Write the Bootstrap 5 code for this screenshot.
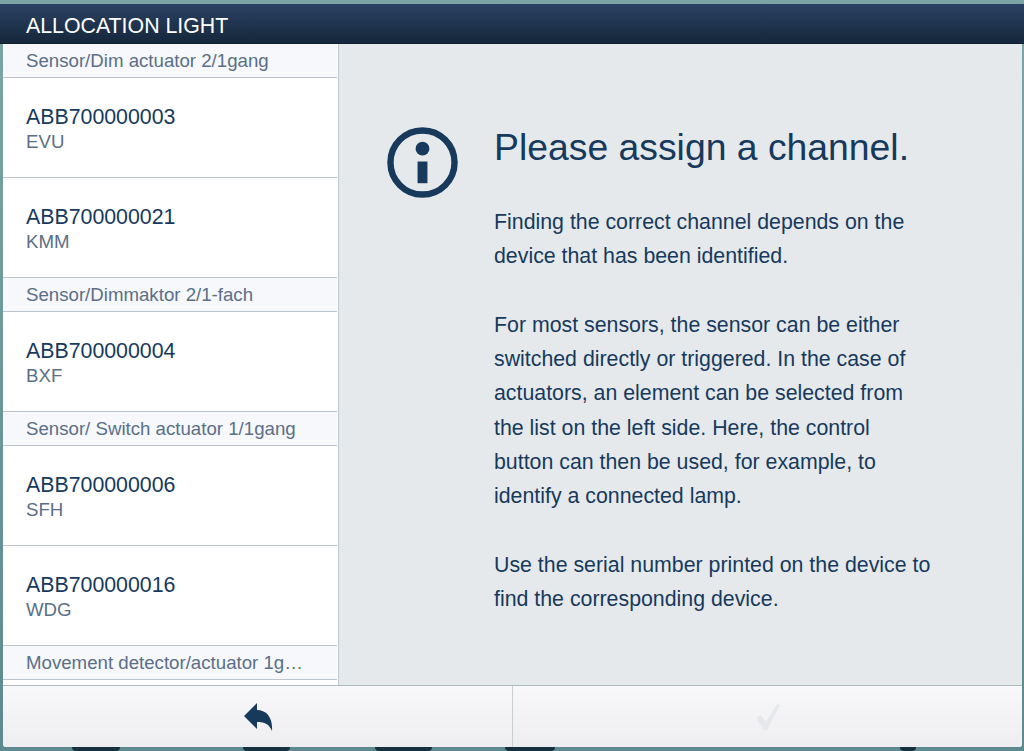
<!DOCTYPE html>
<html lang="en">
<head>
<meta charset="utf-8">
<title>Allocation light</title>
<link href="https://cdn.jsdelivr.net/npm/bootstrap@5.3.0/dist/css/bootstrap.min.css" rel="stylesheet">
<style>
html,body{height:751px;overflow:hidden}
body{background:linear-gradient(#7ba6a3,#5c8a8f);font-family:"Liberation Sans",Arial,sans-serif;color:#17395c;padding-top:4px}
.titlebar{height:40px;background:linear-gradient(#2b4263,#15273b);color:#fff;font-size:21.33px;line-height:44px;padding-left:26px;border-bottom:1px solid #10202f}
.shell{height:703px;margin-left:3px;margin-right:2px;border-radius:0 0 3px 3px;overflow:hidden;background:#e5e9ec}
.mainrow{height:641px;min-height:0}
.sidelist{width:334px;flex:none;background:#fff;border-right:1px solid #bfc8cd;box-sizing:content-box;padding-right:1px;overflow:hidden}
.sechead{height:33.5px;background:#f6f8fb;color:#5b6f87;font-size:18.67px;line-height:34.4px;padding-left:23px;border-bottom:1px solid #bcc5cd;white-space:nowrap}
.chan{height:100.4px;padding:27px 0 0 23px;border-bottom:1px solid #bcc3ca}
.chan-id{font-size:21.33px;line-height:25px;color:#17395c}
.chan-sub{font-size:18.67px;line-height:24px;color:#5b6f87}
.infopane{background:#e5e9ec;padding:83px 0 0 48px}
.infoicon{width:71px;height:71px;flex:none;margin-right:36px}
.infohead{font-size:37.33px;line-height:40px;margin:0 0 38px;color:#17395c;font-weight:400}
.infotext{font-size:21.33px;line-height:34.25px;margin:0 0 34.25px;color:#17395c}
.bottombar{height:62px;background:linear-gradient(#f8f8fb,#eeeef0);border-top:1px solid #aebcbf;flex:none}
.barbtn{border:0;background:transparent;padding:0}
.backbtn{width:509px;flex:none}
.okbtn{flex:1 1 0;border-left:1px solid #c9ced2}
.strip{height:4px;padding-left:72px}
.bump{height:4px;background:#16303f;border-radius:0 0 8px 8px}
</style>
</head>
<body>
<div class="titlebar">ALLOCATION LIGHT</div>
<div class="shell d-flex flex-column">
  <div class="mainrow d-flex">
    <div class="sidelist">
      <div class="sechead">Sensor/Dim actuator 2/1gang</div>
      <div class="chan"><div class="chan-id">ABB700000003</div><div class="chan-sub">EVU</div></div>
      <div class="chan"><div class="chan-id">ABB700000021</div><div class="chan-sub">KMM</div></div>
      <div class="sechead">Sensor/Dimmaktor 2/1-fach</div>
      <div class="chan"><div class="chan-id">ABB700000004</div><div class="chan-sub">BXF</div></div>
      <div class="sechead">Sensor/ Switch actuator 1/1gang</div>
      <div class="chan"><div class="chan-id">ABB700000006</div><div class="chan-sub">SFH</div></div>
      <div class="chan"><div class="chan-id">ABB700000016</div><div class="chan-sub">WDG</div></div>
      <div class="sechead">Movement detector/actuator 1g…</div>
    </div>
    <div class="infopane flex-grow-1 d-flex align-items-start">
      <svg class="infoicon" viewBox="0 0 72 72" aria-hidden="true">
        <circle cx="36" cy="36" r="32.5" fill="none" stroke="#17395c" stroke-width="6.5"/>
        <circle cx="36" cy="22" r="7" fill="#17395c"/>
        <rect x="31" y="35" width="10" height="22" fill="#17395c"/>
      </svg>
      <div>
        <h1 class="infohead">Please assign a channel.</h1>
        <p class="infotext">Finding the correct channel depends on the<br>device that has been identified.</p>
        <p class="infotext">For most sensors, the sensor can be either<br>switched directly or triggered. In the case of<br>actuators, an element can be selected from<br>the list on the left side. Here, the control<br>button can then be used, for example, to<br>identify a connected lamp.</p>
        <p class="infotext">Use the serial number printed on the device to<br>find the corresponding device.</p>
      </div>
    </div>
  </div>
  <div class="bottombar d-flex">
    <button class="barbtn backbtn d-flex align-items-center justify-content-center" type="button" aria-label="Back">
      <svg width="30" height="30" viewBox="0 0 30 30" aria-hidden="true"><path d="M1 14 L14 1 V8 C23 8 30 15 29 29 C26 22 22 20 14 20 V27 Z" fill="#17395c"/></svg>
    </button>
    <button class="barbtn okbtn d-flex align-items-center justify-content-center" type="button" aria-label="Confirm" disabled>
      <svg width="26" height="30" viewBox="0 0 26 30" aria-hidden="true"><path d="M1 16 L6 13 L11 20 L22 2 L25 3 L12 28 L9 28 Z" fill="#e6e9eb"/></svg>
    </button>
  </div>
</div>
<div class="strip d-flex">
  <div class="bump" style="width:48px;margin-right:123px"></div>
  <div class="bump" style="width:47px;margin-right:85px"></div>
  <div class="bump" style="width:57px;margin-right:73px"></div>
  <div class="bump" style="width:50px;margin-right:345px"></div>
  <div class="bump" style="width:16px"></div>
</div>
</body>
</html>
